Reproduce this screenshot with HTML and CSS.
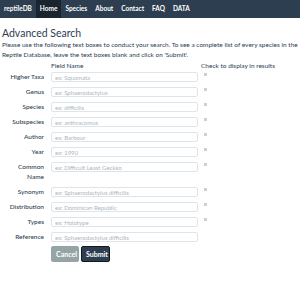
FILE: index.html
```html
<!DOCTYPE html>
<html lang="en">
<head>
    <meta charset="UTF-8">
    <title>Advanced Search</title>
    <link rel="stylesheet" href="styles.css">
</head>
<body>
    <nav class="navbar">
        <a class="brand" href="#">reptileDB</a>
        <a class="nav-link active" href="#">Home</a>
        <a class="nav-link" href="#">Species</a>
        <a class="nav-link" href="#">About</a>
        <a class="nav-link" href="#">Contact</a>
        <a class="nav-link" href="#">FAQ</a>
        <a class="nav-link" href="#">DATA</a>
    </nav>

    <div class="container">
        <h1>Advanced Search</h1>
        <p class="intro">Please use the following text boxes to conduct your search. To see a complete list of every species in the Reptile Database, leave the text boxes blank and click on 'Submit'.</p>

        <form class="search-form">
            <div class="head"></div>
            <div class="head">Field Name</div>
            <div class="head head-check">Check to display in results</div>

            <label>Higher Taxa</label>
            <input type="text" placeholder="ex: Squamata">
            <span class="check"><input type="checkbox"></span>

            <label>Genus</label>
            <input type="text" placeholder="ex: Sphaerodactylus">
            <span class="check"><input type="checkbox"></span>

            <label>Species</label>
            <input type="text" placeholder="ex: difficilis">
            <span class="check"><input type="checkbox"></span>

            <label>Subspecies</label>
            <input type="text" placeholder="ex: anthracomus">
            <span class="check"><input type="checkbox"></span>

            <label>Author</label>
            <input type="text" placeholder="ex: Barbour">
            <span class="check"><input type="checkbox"></span>

            <label>Year</label>
            <input type="text" placeholder="ex: 1990">
            <span class="check"><input type="checkbox"></span>

            <label>Common Name</label>
            <input type="text" placeholder="ex: Difficult Least Geckko">
            <span class="check"><input type="checkbox"></span>

            <label>Synonym</label>
            <input type="text" placeholder="ex: Sphaerodactylus difficilis">
            <span class="check"><input type="checkbox"></span>

            <label>Distribution</label>
            <input type="text" placeholder="ex: Dominican Republic">
            <span class="check"><input type="checkbox"></span>

            <label>Types</label>
            <input type="text" placeholder="ex: Holotype">
            <span class="check"><input type="checkbox"></span>

            <label>Reference</label>
            <input type="text" placeholder="ex: Sphaerodactylus difficilis">
            <span class="check"></span>

            <div></div>
            <div class="buttons">
                <button type="reset" class="btn btn-default">Cancel</button>
                <button type="submit" class="btn btn-primary">Submit</button>
            </div>
        </form>
    </div>
</body>
</html>
```

FILE: styles.css
```css
:root {
    --primary: #2c3e50;
    --primary-dark: #1a242f;
    --default: #95a5a6;
    --border: #dce4ec;
    --placeholder: #acb6c0;
}

body {
    font-family: Lato, 'Open Sans', sans-serif;
    color: var(--primary);
    margin: 0;
    background-color: white;
}

.navbar {
    display: flex;
    height: 18px;
    padding-left: 1px;
    background-color: var(--primary);
}

.navbar a {
    color: white;
    text-decoration: none;
    font-weight: bold;
    font-size: 6.5px;
    line-height: 18px;
    padding: 0 4px;
}

.navbar .brand {
    padding: 0 4px 0 3px;
}

.navbar .active {
    background-color: var(--primary-dark);
}

.container {
    padding: 0 2px;
}

h1 {
    font-size: 10.5px;
    font-weight: normal;
    margin: 9px 0 1px;
}

.intro {
    font-size: 6.5px;
    line-height: 10px;
    margin: 0 0 2px;
}

.search-form {
    display: grid;
    grid-template-columns: 42px 147px auto;
    column-gap: 7px;
    row-gap: 5px;
    align-items: start;
    font-size: 6.5px;
}

.head {
    line-height: 8px;
    margin-bottom: -3px;
}

.head-check {
    margin-left: -4px;
}

.search-form label {
    text-align: right;
    line-height: 10px;
    font-size: 6.5px;
    font-weight: 500;
}

.search-form input[type="text"] {
    box-sizing: border-box;
    width: 147px;
    height: 10px;
    padding: 0 3px;
    border: 1px solid var(--border);
    border-radius: 2px;
    font-family: inherit;
    font-size: 6px;
    color: var(--primary);
    outline: none;
}

.search-form input::placeholder {
    color: var(--placeholder);
}

.check {
    display: block;
    height: 10px;
}

.check input {
    appearance: none;
    display: block;
    width: 3px;
    height: 3px;
    margin: 1px 0 0 -1px;
    background-color: #d0d0d0;
    border: none;
}

.buttons {
    display: flex;
    gap: 2px;
    margin-top: -1px;
}

.btn {
    font-family: inherit;
    font-size: 7px;
    font-weight: bold;
    color: white;
    border-radius: 2px;
    height: 16px;
    padding: 0 4px;
    cursor: pointer;
}

.btn-default {
    width: 28px;
    background-color: var(--default);
    border: 1px solid var(--default);
}

.btn-primary {
    width: 29px;
    background-color: var(--primary);
    border: 1px solid #101820;
}
```
